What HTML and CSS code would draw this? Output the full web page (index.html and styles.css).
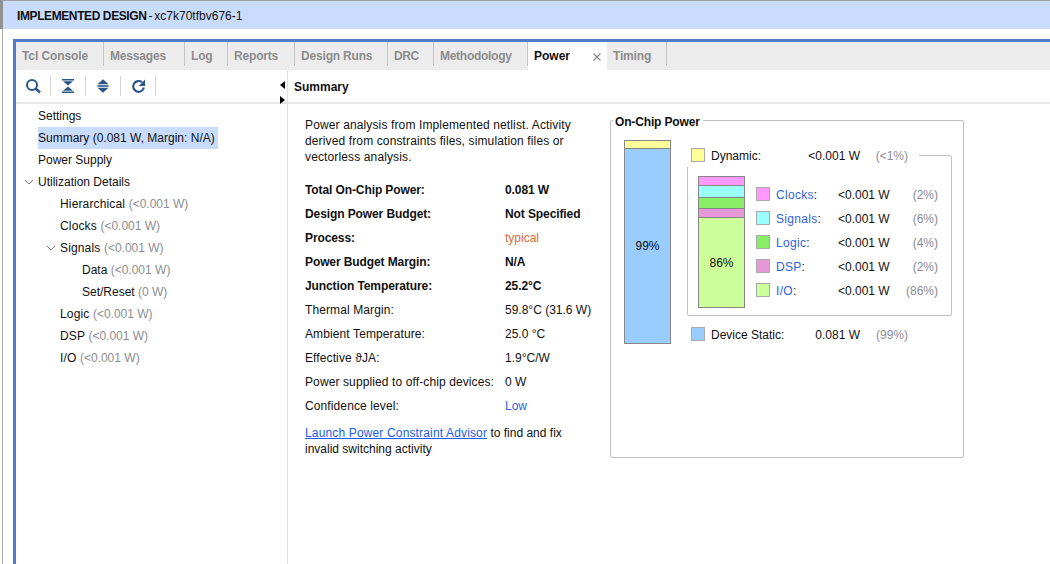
FILE: index.html
```html
<!DOCTYPE html>
<html lang="en">
<head>
<meta charset="utf-8">
<title>Power</title>
<link rel="stylesheet" href="styles.css">
</head>
<body>
<header class="title-bar"><b>IMPLEMENTED DESIGN</b> - xc7k70tfbv676-1</header>
<div class="workspace">
  <div class="frame">
    <nav class="tabs">
      <span class="tab">Tcl Console</span>
      <span class="tab">Messages</span>
      <span class="tab">Log</span>
      <span class="tab">Reports</span>
      <span class="tab">Design Runs</span>
      <span class="tab">DRC</span>
      <span class="tab">Methodology</span>
      <span class="tab active"><span>Power</span>
        <svg class="close" width="8" height="8" viewBox="0 0 8 8"><path d="M.5.5l7 7M7.5.5l-7 7" stroke="#8a8a8a" stroke-width="1.2" fill="none"/></svg>
      </span>
      <span class="tab">Timing</span>
    </nav>
    <div class="panes">
      <aside class="side">
        <div class="toolbar">
          <button class="tool"><svg width="16" height="16" viewBox="0 0 16 16"><circle cx="6" cy="7" r="5" fill="none" stroke="#2c5688" stroke-width="2"/><path d="M9.5 10.5l4.5 4" stroke="#2c5688" stroke-width="2.4"/></svg></button>
          <button class="tool"><svg width="14" height="14" viewBox="0 0 14 14"><path d="M1 0h12v1.5H1zM1 12.5h12V14H1z" fill="#2c5688"/><path d="M2 2.2h10L7 6.6zM2 11.8h10L7 7.4z" fill="#2c5688"/></svg></button>
          <button class="tool"><svg width="14" height="14" viewBox="0 0 14 14"><path d="M1.5 5.2h11L7 .2zM1.5 8.8h11L7 13.8z" fill="#2c5688"/><path d="M1.5 6.2h11v1.6h-11z" fill="#2c5688"/></svg></button>
          <button class="tool"><svg width="16" height="16" viewBox="0 0 16 16"><path d="M11 4.2A5.4 5.4 0 1 0 12.9 9.5" fill="none" stroke="#2c5688" stroke-width="2.2"/><path d="M14 1.5v6.5H7.8z" fill="#2c5688"/></svg></button>
        </div>
        <ul class="tree">
          <li class="l1">Settings</li>
          <li class="l1"><span class="selected">Summary (0.081 W, Margin: N/A)</span></li>
          <li class="l1">Power Supply</li>
          <li class="l1"><svg class="caret" width="10" height="6" viewBox="0 0 10 6"><path d="M1 1l4 4 4-4" fill="none" stroke="#777" stroke-width="1"/></svg>Utilization Details</li>
          <li class="l2">Hierarchical <i>(&lt;0.001 W)</i></li>
          <li class="l2">Clocks <i>(&lt;0.001 W)</i></li>
          <li class="l2"><svg class="caret" width="10" height="6" viewBox="0 0 10 6"><path d="M1 1l4 4 4-4" fill="none" stroke="#777" stroke-width="1"/></svg>Signals <i>(&lt;0.001 W)</i></li>
          <li class="l3">Data <i>(&lt;0.001 W)</i></li>
          <li class="l3">Set/Reset <i>(0 W)</i></li>
          <li class="l2">Logic <i>(&lt;0.001 W)</i></li>
          <li class="l2">DSP <i>(&lt;0.001 W)</i></li>
          <li class="l2">I/O <i>(&lt;0.001 W)</i></li>
        </ul>
        <div class="splitter"><span class="arrow-l"></span><span class="arrow-r"></span></div>
      </aside>
      <main class="detail">
        <h2 class="detail-title">Summary</h2>
        <div class="detail-body">
          <section class="info">
            <p class="intro">Power analysis from Implemented netlist. Activity derived from constraints files, simulation files or vectorless analysis.</p>
            <dl class="facts">
              <dt class="strong">Total On-Chip Power:</dt><dd class="strong">0.081 W</dd>
              <dt class="strong">Design Power Budget:</dt><dd class="strong">Not Specified</dd>
              <dt class="strong">Process:</dt><dd class="orange">typical</dd>
              <dt class="strong">Power Budget Margin:</dt><dd class="strong">N/A</dd>
              <dt class="strong">Junction Temperature:</dt><dd class="strong">25.2°C</dd>
              <dt>Thermal Margin:</dt><dd>59.8°C (31.6 W)</dd>
              <dt>Ambient Temperature:</dt><dd>25.0 °C</dd>
              <dt>Effective ϑJA:</dt><dd>1.9°C/W</dd>
              <dt>Power supplied to off-chip devices:</dt><dd>0 W</dd>
              <dt>Confidence level:</dt><dd class="blue">Low</dd>
            </dl>
            <p class="advisor"><a href="#">Launch Power Constraint Advisor</a> to find and fix invalid switching activity</p>
          </section>
          <section class="chip">
            <h3 class="chip-title">On-Chip Power</h3>
            <div class="bar total">
              <div class="seg s-dynamic"></div>
              <div class="seg s-static">99%</div>
            </div>
            <div class="breakdown">
              <div class="row dynamic-row">
                <span class="swatch c-dynamic"></span><span class="name">Dynamic:</span><span class="watts">&lt;0.001 W</span><span class="pct">(&lt;1%)</span>
              </div>
              <div class="group">
                <div class="bar sub">
                  <div class="seg s-clocks"></div>
                  <div class="seg s-signals"></div>
                  <div class="seg s-logic"></div>
                  <div class="seg s-dsp"></div>
                  <div class="seg s-io">86%</div>
                </div>
                <div class="legend">
                  <div class="item"><span class="swatch c-clocks"></span><span class="lname"><a>Clocks</a>:</span><span class="watts">&lt;0.001 W</span><span class="pct">(2%)</span></div>
                  <div class="item"><span class="swatch c-signals"></span><span class="lname"><a>Signals</a>:</span><span class="watts">&lt;0.001 W</span><span class="pct">(6%)</span></div>
                  <div class="item"><span class="swatch c-logic"></span><span class="lname"><a>Logic</a>:</span><span class="watts">&lt;0.001 W</span><span class="pct">(4%)</span></div>
                  <div class="item"><span class="swatch c-dsp"></span><span class="lname"><a>DSP</a>:</span><span class="watts">&lt;0.001 W</span><span class="pct">(2%)</span></div>
                  <div class="item"><span class="swatch c-io"></span><span class="lname"><a>I/O</a>:</span><span class="watts">&lt;0.001 W</span><span class="pct">(86%)</span></div>
                </div>
              </div>
              <div class="row static-row">
                <span class="swatch c-static"></span><span class="name">Device Static:</span><span class="watts">0.081 W</span><span class="pct">(99%)</span>
              </div>
            </div>
          </section>
        </div>
      </main>
    </div>
  </div>
</div>
</body>
</html>
```
FILE: styles.css
```css
* { box-sizing: border-box; }
html, body { margin: 0; height: 100%; overflow: hidden; }
body {
  background: #fff;
  color: #111;
  font: 12px/16px "Liberation Sans", Arial, sans-serif;
  display: flex;
  flex-direction: column;
}
.title-bar {
  height: 29px;
  flex: none;
  border-top: 1px solid #a0a0a0;
  border-left: 3px solid #909090;
  background: #c9dcfd;
  padding: 7px 0 0 14px;
  line-height: 16px;
  word-spacing: -1.4px;
}
.title-bar b { font-weight: bold; letter-spacing: -.4px; word-spacing: 0; }
.workspace {
  flex: 1;
  min-height: 0;
  margin-left: 2px;
  border-left: 1px solid #a8a8a8;
  padding: 10px 0 0 10px;
  display: flex;
}
.frame {
  flex: 1;
  min-width: 0;
  border-left: 3px solid #4f7bc9;
  border-top: 3px solid #4f7bc9;
  display: flex;
  flex-direction: column;
}
.tabs {
  height: 28px;
  flex: none;
  background: #ececec;
  display: flex;
}
.tab {
  height: 24px;
  padding: 6px 0 0 6px;
  border-right: 1px solid #c4c4c4;
  color: #8c8c8c;
  font-weight: bold;
  letter-spacing: -.18px;
  white-space: nowrap;
}
.tab:nth-child(1) { width: 88px; letter-spacing: -.1px; }
.tab:nth-child(2) { width: 81px; }
.tab:nth-child(3) { width: 43px; }
.tab:nth-child(4) { width: 67px; }
.tab:nth-child(5) { width: 93px; }
.tab:nth-child(6) { width: 46px; letter-spacing: -.4px; }
.tab:nth-child(7) { width: 94px; letter-spacing: -.28px; }
.tab:nth-child(9) { width: 60px; }
.tab.active {
  height: 28px;
  width: 79px;
  background: #fff;
  color: #111;
  border: 0;
  letter-spacing: 0;
  position: relative;
}
.close { position: absolute; left: 65px; top: 11px; }
.panes { flex: 1; min-height: 0; display: flex; }
.side {
  width: 272px;
  flex: none;
  border-right: 1px solid #e0e0e0;
  position: relative;
}
.toolbar {
  height: 34px;
  border-bottom: 2px solid #e8e8e8;
  display: flex;
  padding: 6px 0 0;
}
.tool {
  width: 35px;
  height: 20px;
  border: 0;
  border-right: 1px solid #d4d4d4;
  background: none;
  display: flex;
  align-items: center;
  justify-content: flex-start;
  padding: 0 0 0 10px;
}
.tree {
  list-style: none;
  margin: 0;
  padding: 1px 0 0;
}
.tree li {
  height: 22px;
  line-height: 22px;
  white-space: nowrap;
  position: relative;
}
.tree i { font-style: normal; color: #8d8d93; letter-spacing: 0; }
.l1 { padding-left: 22px; }
.l2 { padding-left: 44px; letter-spacing: .15px; }
.l3 { padding-left: 66px; }
.selected { display: inline-block; background: #c9dcfd; padding-right: 3px; }
.caret { position: absolute; margin-left: -14px; top: 8px; }
.splitter {
  position: absolute;
  right: 2px;
  top: 11px;
  width: 5px;
  display: flex;
  flex-direction: column;
  gap: 7px;
}
.arrow-l, .arrow-r { display: block; width: 0; height: 0; border-style: solid; }
.arrow-l { border-width: 4.5px 5px 4.5px 0; border-color: transparent #000 transparent transparent; }
.arrow-r { border-width: 4.5px 0 4.5px 5px; border-color: transparent transparent transparent #000; }
.detail { flex: 1; min-width: 0; }
.detail-title {
  height: 34px;
  margin: 0;
  padding: 9px 0 0 6px;
  border-bottom: 2px solid #e8e8e8;
  font-size: 12px;
  line-height: 16px;
  font-weight: bold;
}
.detail-body { display: flex; padding: 13px 0 0 17px; }
.info { width: 307px; flex: none; }
.intro { margin: 0 0 13px; width: 285px; letter-spacing: .13px; }
.facts {
  margin: 0;
  display: grid;
  grid-template-columns: 200px 1fr;
  grid-auto-rows: 24px;
  line-height: 24px;
}
.facts dt, .facts dd { margin: 0; white-space: nowrap; }
.facts dt { letter-spacing: .11px; }
.facts dt.strong, .facts dd.strong { font-weight: bold; letter-spacing: -.1px; }
.orange { color: #de6a3a; }
.blue { color: #2f62e0; }
.advisor { margin: 7px 0 0; width: 270px; }
.advisor a { color: #1a5cf0; text-decoration: underline; letter-spacing: .15px; }
.chip {
  position: relative;
  width: 354px;
  height: 338px;
  flex: none;
  margin: 3px 0 0 -2px;
  border: 1px solid #c0c0c0;
  border-radius: 2px;
  display: flex;
  padding: 19px 13px 0 13px;
}
.chip-title {
  position: absolute;
  left: 2px;
  top: -6px;
  margin: 0;
  padding: 0 3px 0 2px;
  background: #fff;
  font-size: 12px;
  line-height: 14px;
  font-weight: bold;
  letter-spacing: -.15px;
}
.bar {
  flex: none;
  width: 47px;
  border: 1px solid #888;
  display: flex;
  flex-direction: column;
  text-align: center;
}
.total { height: 204px; }
.seg + .seg { border-top: 1px solid #888; }
.s-dynamic { height: 7px; background: #ffff99; }
.s-static { flex: 1; background: #99ccff; padding-top: 89px; }
.breakdown { flex: none; width: 265px; margin-left: 16px; }
.row { display: flex; align-items: center; height: 14px; }
.swatch { flex: none; width: 14px; height: 14px; border: 1px solid #aaa; }
.name, .lname, .watts, .pct { padding-top: 2px; white-space: nowrap; }
.name { width: 97px; margin-left: 6px; }
.row .watts { width: 52px; text-align: right; }
.row .pct { width: 48px; text-align: right; color: #8d8d93; }
.dynamic-row {
  width: 233px;
  height: 19px;
  margin: 8px 0 0 -1px;
  padding: 0 0 5px 5px;
  background: #fff;
  position: relative;
}
.static-row { margin-top: 11px; padding-left: 4px; }
.group {
  margin-top: -12px;
  height: 161px;
  border: 1px solid #c0c0c0;
  border-radius: 2px;
  display: flex;
  padding: 20px 0 0 10px;
}
.sub { width: 47px; height: 132px; }
.s-clocks { height: 8px; background: #ff99ff; }
.s-signals { height: 12px; background: #99ffff; }
.s-logic { height: 11px; background: #88ee66; }
.s-dsp { height: 9px; background: #e699d6; }
.s-io { flex: 1; background: #ccff99; padding-top: 37px; }
.legend { flex: 1; margin-left: 11px; padding-top: 11px; display: flex; flex-direction: column; gap: 10px; }
.item { display: flex; align-items: center; height: 14px; }
.lname { width: 62px; margin-left: 6px; color: #111; }
.lname a { color: #2f62e0; letter-spacing: .3px; }
.item .watts { width: 52px; }
.item .pct { width: 48px; text-align: right; color: #8d8d93; }
.c-dynamic { background: #ffff99; }
.c-static { background: #99ccff; }
.c-clocks { background: #ff99ff; }
.c-signals { background: #99ffff; }
.c-logic { background: #88ee66; }
.c-dsp { background: #e699d6; }
.c-io { background: #ccff99; }
```
